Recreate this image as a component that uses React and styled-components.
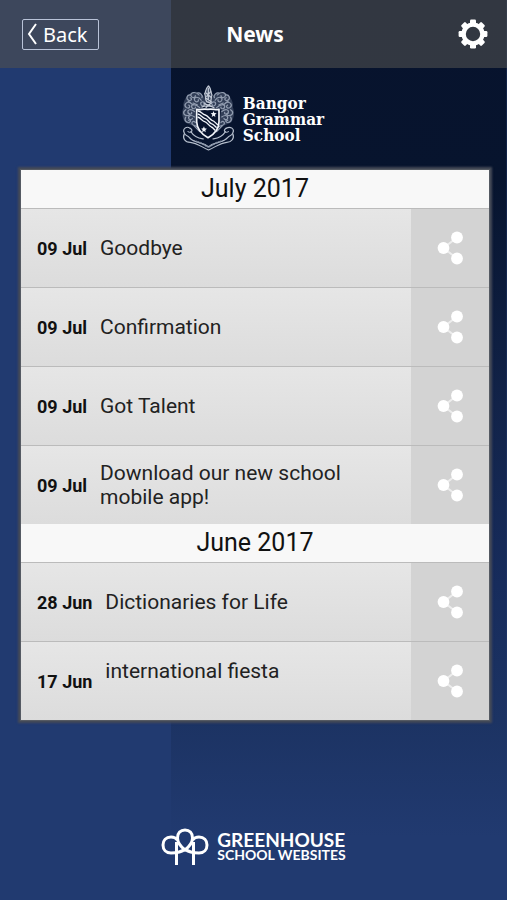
import React from "react";
import styled, { createGlobalStyle } from "styled-components";

const months = [
  {
    name: "July 2017",
    items: [
      { day: "09 Jul", title: "Goodbye" },
      { day: "09 Jul", title: "Confirmation" },
      { day: "09 Jul", title: "Got Talent" },
      { day: "09 Jul", title: "Download our new school mobile app!" },
    ],
  },
  {
    name: "June 2017",
    items: [
      { day: "28 Jun", title: "Dictionaries for Life" },
      { day: "17 Jun", title: "international fiesta", tall: true },
    ],
  },
];

const GearIcon = () => (
  <svg width="30" height="30" viewBox="0 0 30 30" aria-hidden="true">
    <circle cx="15" cy="15" r="9.4" fill="none" stroke="#fff" strokeWidth="4.4" />
    {[0, 45, 90, 135, 180, 225, 270, 315].map((angle) => (
      <rect
        key={angle}
        x="12"
        y="0.6"
        width="6"
        height="5"
        rx="1.2"
        fill="#fff"
        transform={`rotate(${angle} 15 15)`}
      />
    ))}
  </svg>
);

const ShareIcon = () => (
  <svg width="26" height="34" viewBox="0 0 26 34" aria-hidden="true">
    <path d="M20 6.5 6.5 17 20 27.5" fill="none" stroke="#ededed" strokeWidth="2" />
    <circle cx="20" cy="6.5" r="5.9" fill="#fff" />
    <circle cx="6.5" cy="17" r="5.9" fill="#fff" />
    <circle cx="20" cy="27.5" r="5.9" fill="#fff" />
  </svg>
);

const Mantling = () => (
  <g fill="none" stroke="#929db0" strokeWidth="3.4" strokeLinecap="round">
    <path
      d="M82 56C74 36 56 20 42 28C28 34 14 56 18 72C12 88 14 104 22 118C32 124 44 128 56 134L50 80L70 74Z"
      fill="#8490a5"
      fillOpacity="0.35"
      stroke="none"
    />
    <path d="M78 62C70 52 62 58 66 66C70 72 76 68 74 64" />
    <path d="M66 52C58 38 44 42 48 52C52 60 60 56 58 50" />
    <path d="M60 36C50 24 36 28 38 38C40 46 50 46 50 38" />
    <path d="M38 36C26 34 24 48 32 52C40 54 42 46 36 44" />
    <path d="M62 74C50 62 38 62 40 72C42 80 52 78 50 72" />
    <path d="M36 58C22 56 18 68 26 74C34 78 38 70 32 66" />
    <path d="M48 86C38 76 28 80 30 88C32 96 42 94 40 88" />
    <path d="M24 80C14 86 18 98 28 98C36 98 36 90 30 90" />
    <path d="M48 102C38 94 30 98 32 106C34 112 42 110 42 106" />
    <path d="M24 102C18 112 26 120 34 118C40 114 36 108 32 112" />
    <path d="M50 118C44 112 38 118 42 124C46 128 52 128 54 130" />
    <path d="M68 44C72 36 62 28 56 30M44 60L56 66M30 54L44 66M46 128L62 146" />
  </g>
);

const Crest = () => (
  <svg width="60" height="72" viewBox="0 0 180 216" role="img" aria-label="School crest">
    <g transform="translate(-9 0) scale(1.1 1)">
      <Mantling />
      <g transform="matrix(-1 0 0 1 170 0)">
        <Mantling />
      </g>
      <g fill="none" stroke="#b4bdcb" strokeWidth="3.4" strokeLinejoin="round" strokeLinecap="round">
        <path d="M36 136C26 128 14 138 20 150C22 160 30 156 34 164C46 182 62 172 86 192C108 172 124 182 138 164C142 156 150 160 152 150C158 138 146 128 134 136" />
        <path d="M20 152C14 166 22 178 36 178C54 180 64 190 86 201C108 190 118 180 136 178C148 178 158 166 152 152" />
        <path d="M36 136C46 142 38 152 30 146M134 136C124 142 132 152 140 146" />
        <path d="M38 146C48 164 62 166 72 168M132 146C122 164 108 166 98 168" />
      </g>
      <path
        d="M46 174C62 176 70 184 86 192C100 184 108 176 126 174"
        fill="none"
        stroke="#8490a5"
        strokeWidth="5"
        strokeDasharray="3 2"
      />
    </g>
    <g fill="none" stroke="#c3cad6" strokeWidth="3.6" strokeLinecap="round">
      <path
        d="M84 10C76 18 78 26 74 32C78 40 74 46 80 56L90 60C96 50 92 44 96 36C92 28 94 18 86 9Z"
        fill="#8490a5"
        fillOpacity="0.5"
      />
      <path d="M85 16V54M78 30L92 42M92 26L80 40M78 46L94 56" />
      <path d="M66 72C76 66 92 68 102 74M72 62L96 70M94 60L78 74" />
    </g>
    <path
      d="M50 79C60 82 68 76 83 79C98 76 108 82 117 79V116C117 140 102 154 84 164C66 154 51 140 50 116Z"
      fill="#07132d"
      stroke="#f2f5fa"
      strokeWidth="5"
      strokeLinejoin="round"
    />
    <g fill="none" stroke="#f2f5fa" strokeWidth="4">
      <path d="M53 84C64 84 66 94 76 96C84 98 88 108 96 112C104 114 108 122 114 126" />
      <path d="M53 93C62 94 66 104 74 106C84 108 86 118 94 122C102 124 106 132 110 134" />
      <path d="M53 102C62 104 66 114 74 116C82 118 86 128 94 132C100 134 102 140 106 142" />
    </g>
    <g fill="#f2f5fa">
      <path d="m101 84 2 6 7 1-5 4 1 7-5-4-6 4 2-7-5-4 6-1Z" />
      <path d="m72 130 2 6 7 1-5 4 1 7-5-4-6 4 2-7-5-4 6-1Z" />
    </g>
  </svg>
);

const TreesIcon = () => (
  <svg width="48" height="38" viewBox="0 0 48 38" aria-hidden="true">
    <g fill="none" stroke="#fff" strokeWidth="3">
      <path d="M24 22C19 18 16.500 14 16.500 10C16.500 5 19.500 2 24 2C28.500 2 31.500 5 31.500 10C31.500 14 29 18 24 22Z" />
      <path d="M16.500 12C15 10 13 9 10 9C5 9 2 12.500 2 17C2 21.500 5 25 10 25C15 25 20 24.500 24 21" />
      <path d="M31.500 12C33 10 35 9 38 9C43 9 46 12.500 46 17C46 21.500 43 25 38 25C33 25 28 24.500 24 21" />
      <path d="M15.500 37V14M32.500 37V14" />
    </g>
  </svg>
);

const App = () => {
  return (
    <Page>
      <GlobalStyle />
      <TopBar>
        <BackButton type="button">
          <svg width="10" height="22" viewBox="0 0 10 22" aria-hidden="true">
            <path d="M9 1 2 11l7 10" fill="none" stroke="#fff" strokeWidth="2" />
          </svg>
          Back
        </BackButton>
        <PageTitle>News</PageTitle>
        <SettingsButton type="button" aria-label="Settings">
          <GearIcon />
        </SettingsButton>
      </TopBar>
      <School>
        <Crest />
        <SchoolName>
          Bangor
          <br />
          Grammar
          <br />
          School
        </SchoolName>
      </School>
      <News>
        {months.map((month) => (
          <section key={month.name}>
            <Month>{month.name}</Month>
            <List>
              {month.items.map((item) => (
                <Row key={item.title}>
                  <Entry>
                    <Day>{item.day}</Day>
                    <Title $tall={item.tall}>{item.title}</Title>
                  </Entry>
                  <ShareButton type="button" aria-label={`Share ${item.title}`}>
                    <ShareIcon />
                  </ShareButton>
                </Row>
              ))}
            </List>
          </section>
        ))}
      </News>
      <Footer>
        <TreesIcon />
        <Brand>
          <BrandName>GREENHOUSE</BrandName>
          <BrandLine>SCHOOL WEBSITES</BrandLine>
        </Brand>
      </Footer>
    </Page>
  );
};

const GlobalStyle = createGlobalStyle`
  * {
    box-sizing: border-box;
  }
  body {
    margin: 0;
    font-family: Roboto, sans-serif;
  }
`;
const Page = styled.div`
  display: flex;
  flex-direction: column;
  min-height: 100vh;
  background: linear-gradient(
      to bottom,
      #07132d 0%,
      #07142e 20%,
      #122349 45%,
      #172c5c 65%,
      #1c3363 80%,
      #213a70 93%
    )
    right / 66.2% 100% no-repeat #213a70;
`;
const TopBar = styled.header`
  display: grid;
  grid-template-columns: 1fr auto 1fr;
  align-items: center;
  height: 68px;
  padding: 0 19px 0 22px;
  background-color: rgba(80, 80, 78, 0.6);
  color: white;
`;
const BackButton = styled.button`
  display: flex;
  align-items: center;
  justify-self: start;
  gap: 6px;
  height: 31px;
  padding: 0 10px 0 4px;
  border: 1px solid #b9c3d8;
  border-radius: 2px;
  background: none;
  color: white;
  font-family: "Noto Sans", sans-serif;
  font-size: 20px;
  cursor: pointer;
`;
const PageTitle = styled.h1`
  margin: 0;
  font-family: "Noto Sans", sans-serif;
  font-size: 21px;
  font-weight: 700;
`;
const SettingsButton = styled.button`
  display: flex;
  justify-self: end;
  padding: 0;
  border: none;
  background: none;
  cursor: pointer;
`;
const School = styled.div`
  display: flex;
  justify-content: center;
  align-items: center;
  gap: 3px;
  padding: 15px 3px 14px 0;
`;
const SchoolName = styled.div`
  color: white;
  font-family: "DejaVu Serif Condensed", "DejaVu Serif", serif;
  font-size: 17px;
  font-weight: 700;
  line-height: 16px;
`;
const News = styled.main`
  margin: 0 17px 0 20px;
  border: 1px solid #555a63;
  box-shadow: 0 0 2px 2px #454a57;
`;
const Month = styled.h2`
  margin: 0;
  background-color: #f8f8f8;
  color: #111;
  font-size: 25px;
  font-weight: 400;
  line-height: 38px;
  text-align: center;
`;
const List = styled.ul`
  margin: 0;
  padding: 0;
  list-style: none;
`;
const Row = styled.li`
  display: flex;
  height: 79px;
  border-top: 1px solid #bbb;
`;
const Entry = styled.div`
  display: flex;
  flex: 1;
  align-items: center;
  gap: 13px;
  padding: 0 40px 0 16px;
  background: linear-gradient(to bottom, #e6e6e6, #dcdcdc);
`;
const Day = styled.span`
  flex-shrink: 0;
  color: #111;
  font-size: 18px;
  font-weight: 700;
`;
const Title = styled.span`
  min-height: ${(props) => (props.$tall ? "44px" : "24px")};
  color: #222;
  font-size: 21px;
  line-height: 24px;
`;
const ShareButton = styled.button`
  display: flex;
  justify-content: center;
  align-items: center;
  width: 78px;
  padding: 0;
  border: none;
  background-color: #d3d3d3;
  cursor: pointer;
`;
const Footer = styled.footer`
  display: flex;
  justify-content: center;
  align-items: center;
  gap: 8px;
  margin-top: auto;
  padding: 24px 0 34px;
  color: white;
`;
const Brand = styled.div`
  font-family: Lato, sans-serif;
  font-weight: 700;
`;
const BrandName = styled.div`
  font-size: 19px;
  line-height: 15px;
`;
const BrandLine = styled.div`
  font-size: 14px;
  line-height: 15px;
`;
export default App;
